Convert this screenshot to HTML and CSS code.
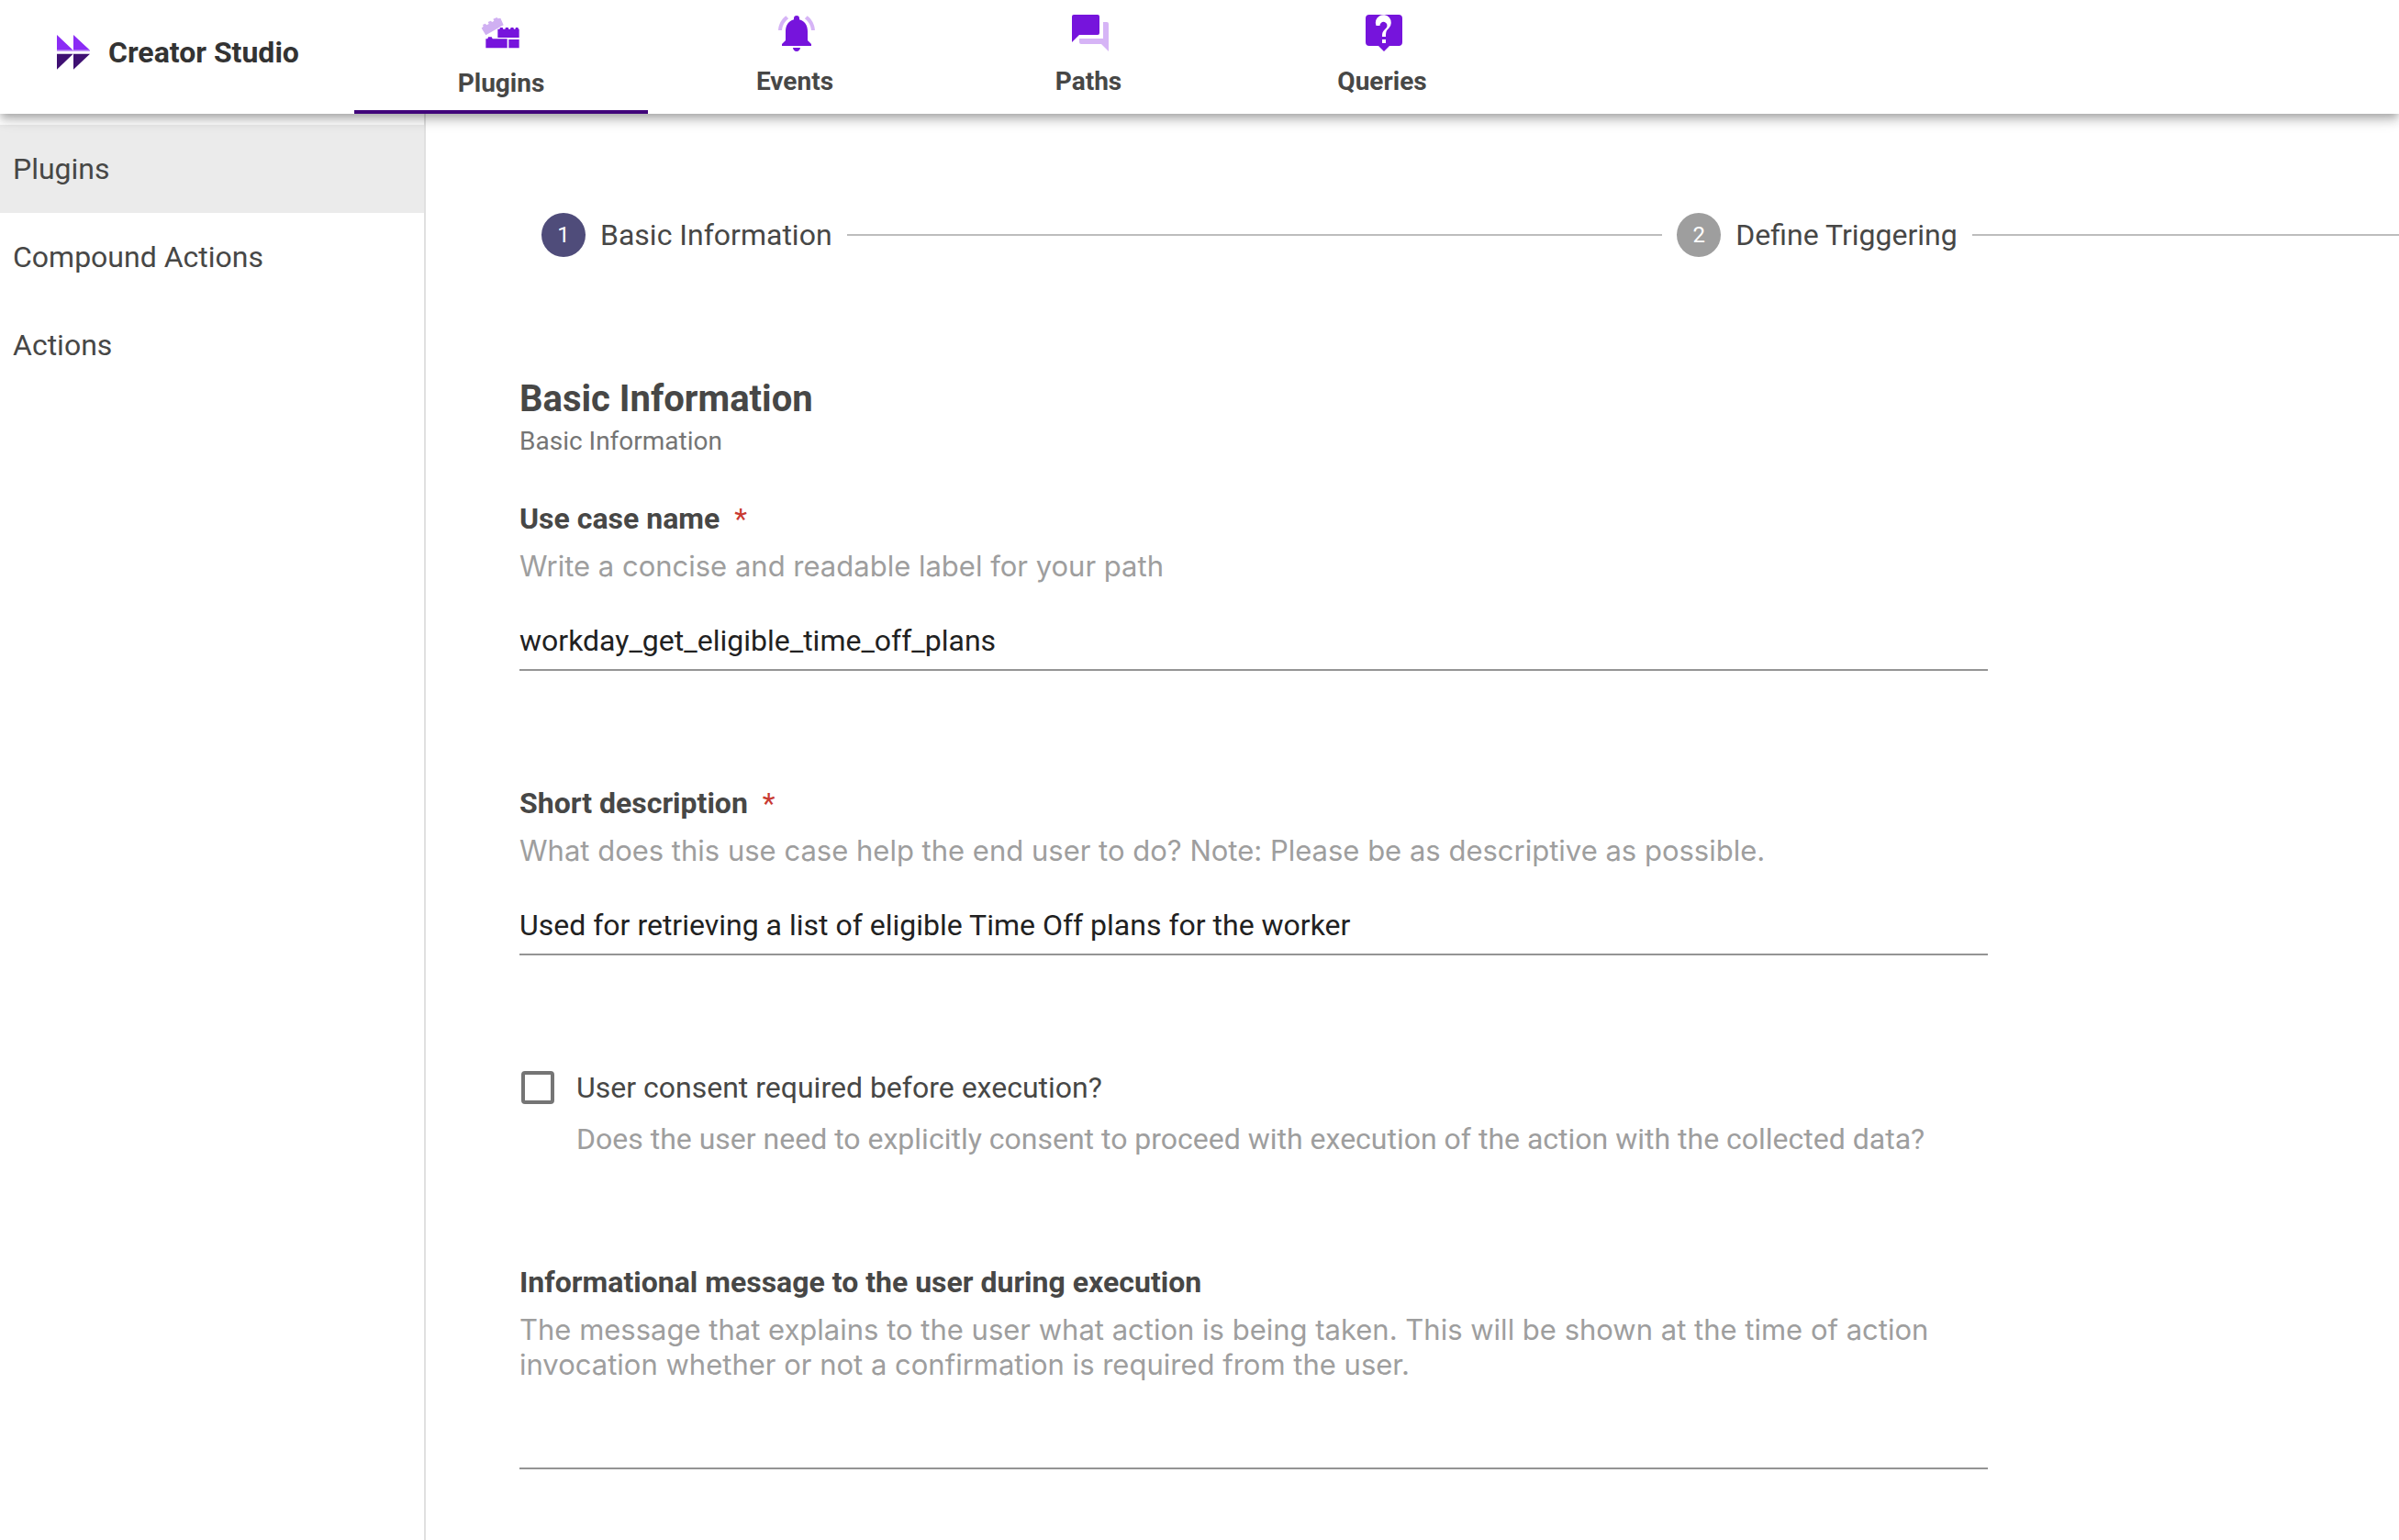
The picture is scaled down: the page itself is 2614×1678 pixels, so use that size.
FILE: index.html
```html
<!DOCTYPE html>
<html lang="en">
<head>
<meta charset="utf-8">
<meta name="viewport" content="width=device-width, initial-scale=1">
<title>Creator Studio</title>
<link rel="stylesheet" href="styles.css">
</head>
<body>
<header class="topbar">
  <a class="brand" href="#">
    <svg class="brand-mark" viewBox="0 0 108 114" aria-hidden="true">
      <path fill="#8b2cf5" d="M0 0 53 50H0zM54 0l54 50H54z"/>
      <path fill="#c9a0fa" d="M0 50h108v4H0z"/>
      <path fill="#3f1073" d="M0 62h53L0 113zM54 62h54L54 113z"/>
    </svg>
    <span>Creator Studio</span>
  </a>
  <nav class="tabs" aria-label="Sections">
    <a class="tab tab-active" href="#" aria-current="page">
      <svg class="tab-icon" viewBox="0 0 144 144" aria-hidden="true">
        <path fill="#d0b0f2" d="M8 56 14 50 12 45 20 41 25 46 32 42 29 36 38 32 43 36 49 32 46 26 58 21 62 25 70 23 80 46 22 79z"/>
        <path fill="#7614dc" d="M61 59h6l2-5h8l2 5h6l2-5h8l2 5h5l2-5h8l2 5h4l2-5h7l2 5h2v28H61zM22 91h6l2-6h11l3 6h48v30H22zM97 93h34v28H97z"/>
      </svg>
      <span>Plugins</span>
    </a>
    <a class="tab" href="#">
      <svg class="tab-icon" viewBox="0 0 48 48" aria-hidden="true">
        <path fill="#7614dc" d="M26 44c2.200 0 4-1.800 4-4h-8c0 2.200 1.800 4 4 4zM38 32V22c0-6.140-3.260-11.280-9-12.640V8a3 3 0 0 0-6 0v1.360C17.280 10.720 14 15.840 14 22v10l-4 4v2h32v-2z"/>
        <path fill="#d6b4f6" d="M17.160 8.160 14.300 5.300C9.500 8.960 6.340 14.600 6.060 21h4c.3-5.300 3.020-9.940 7.100-12.840zM41.940 21h4c-.3-6.400-3.460-12.040-8.240-15.700l-2.840 2.860c4.040 2.900 6.780 7.540 7.080 12.840z"/>
      </svg>
      <span>Events</span>
    </a>
    <a class="tab" href="#">
      <svg class="tab-icon" viewBox="0 0 48 48" aria-hidden="true">
        <path fill="#7614dc" d="M36 24V6a2 2 0 0 0-2-2H8a2 2 0 0 0-2 2v28l8-8h20a2 2 0 0 0 2-2z"/>
        <path fill="#d6b4f6" d="M44 12h-4v18H14v4a2 2 0 0 0 2 2h22l8 8V14a2 2 0 0 0-2-2z"/>
      </svg>
      <span>Paths</span>
    </a>
    <a class="tab" href="#">
      <svg class="tab-icon" viewBox="0 0 48 48" aria-hidden="true">
        <path fill="#7614dc" d="M42 4H10a4 4 0 0 0-4 4v26a4 4 0 0 0 4 4h10l6 6 6-6h10a4 4 0 0 0 4-4V8a4 4 0 0 0-4-4z"/>
        <path fill="#fff" d="M24 31h4v4h-4zM31.500 18.500l-1.600 1.700C28.600 21.500 28 23 28 28h-4v-1c0-3 .8-4.800 2.300-6.300l2.400-2.500A4 4 0 1 0 21.500 16h-4a8.500 8.500 0 1 1 14 2.500z"/>
      </svg>
      <span>Queries</span>
    </a>
  </nav>
</header>
<div class="layout">
  <nav class="sidebar" aria-label="Plugins menu">
    <a class="side-link side-link-active" href="#" aria-current="page">Plugins</a>
    <a class="side-link" href="#">Compound Actions</a>
    <a class="side-link" href="#">Actions</a>
  </nav>
  <main class="main">
    <ol class="stepper">
      <li class="step" aria-current="step"><span class="step-number step-number-active">1</span><span>Basic Information</span></li>
      <li class="connector" aria-hidden="true"></li>
      <li class="step"><span class="step-number">2</span><span>Define Triggering</span></li>
      <li class="connector" aria-hidden="true"></li>
    </ol>
    <form class="form">
      <h1 class="form-title">Basic Information</h1>
      <p class="form-subtitle">Basic Information</p>
      <div class="field">
        <label class="label" for="use-case">Use case name<span class="required">*</span></label>
        <p class="hint" id="use-case-hint">Write a concise and readable label for your path</p>
        <input class="text-input" id="use-case" type="text" value="workday_get_eligible_time_off_plans" aria-describedby="use-case-hint">
      </div>
      <div class="field">
        <label class="label" for="description">Short description<span class="required">*</span></label>
        <p class="hint" id="description-hint">What does this use case help the end user to do? Note: Please be as descriptive as possible.</p>
        <input class="text-input" id="description" type="text" value="Used for retrieving a list of eligible Time Off plans for the worker" aria-describedby="description-hint">
      </div>
      <div class="consent">
        <input class="checkbox" id="consent" type="checkbox" aria-describedby="consent-hint">
        <label class="consent-label" for="consent">User consent required before execution?</label>
        <p class="consent-hint" id="consent-hint">Does the user need to explicitly consent to proceed with execution of the action with the collected data?</p>
      </div>
      <div class="field">
        <label class="label" for="message">Informational message to the user during execution</label>
        <p class="hint" id="message-hint">The message that explains to the user what action is being taken. This will be shown at the time of action invocation whether or not a confirmation is required from the user.</p>
        <input class="text-input" id="message" type="text" aria-describedby="message-hint">
      </div>
    </form>
  </main>
</div>
</body>
</html>
```
FILE: styles.css
```css
* {
  box-sizing: border-box;
}

body {
  margin: 0;
  min-height: 100vh;
  display: flex;
  flex-direction: column;
  overflow-x: hidden;
  background: #fff;
  color: #474746;
  font-family: Roboto, "Liberation Sans", sans-serif;
  font-size: 32px;
  line-height: 38px;
}

a {
  color: inherit;
  text-decoration: none;
}

p,
h1 {
  margin: 0;
}

.topbar {
  position: relative;
  z-index: 1;
  display: flex;
  height: 124px;
  background: #fff;
  box-shadow: 0 4px 8px -2px rgba(0, 0, 0, 0.2), 0 8px 10px rgba(0, 0, 0, 0.14), 0 2px 20px rgba(0, 0, 0, 0.12);
}

.brand {
  display: flex;
  align-items: center;
  gap: 20px;
  width: 386px;
  padding: 0 0 10px 62px;
  color: #333;
  font-weight: 700;
}

.brand-mark {
  width: 36px;
  height: 38px;
}

.tabs {
  display: flex;
}

.tab {
  display: flex;
  flex-direction: column;
  align-items: center;
  gap: 12px;
  width: 320px;
  padding-top: 12px;
  font-size: 28px;
  font-weight: 700;
  line-height: 34px;
}

.tab-active {
  gap: 14px;
  border-bottom: 4px solid #40057a;
}

.tab-icon {
  width: 48px;
  height: 48px;
}

.layout {
  flex: 1;
  display: flex;
}

.sidebar {
  flex: none;
  width: 464px;
  padding-top: 12px;
  border-right: 2px solid #e0e0e0;
}

.side-link {
  display: flex;
  align-items: center;
  height: 96px;
  padding: 0 14px;
}

.side-link-active {
  background: #ebebeb;
}

.main {
  flex: 1;
  min-width: 0;
  overflow: hidden;
  padding: 108px 102px 76px;
}

.stepper {
  display: flex;
  align-items: center;
  gap: 16px;
  margin: 0 0 131px;
  padding: 0 0 0 24px;
  list-style: none;
}

.step {
  flex: none;
  display: flex;
  align-items: center;
  gap: 16px;
}

.step-number {
  width: 48px;
  height: 48px;
  border-radius: 50%;
  background: #9e9e9e;
  color: #fff;
  font-size: 24px;
  line-height: 48px;
  text-align: center;
}

.step-number-active {
  background: #4f4c7a;
}

.connector {
  flex: none;
  width: 34vw;
  border-top: 2px solid #bdbdbd;
}

.form {
  max-width: 1600px;
}

.form-title {
  font-size: 40px;
  font-weight: 700;
  line-height: 48px;
}

.form-subtitle {
  margin: 5px 0 48px;
  color: #757575;
  font-size: 28px;
  line-height: 34px;
}

.field {
  display: flex;
  flex-direction: column;
  margin-bottom: 125px;
}

.field:last-child {
  margin-bottom: 0;
}

.label {
  font-weight: 700;
}

.required {
  margin-left: 16px;
  color: #c93a32;
  font-weight: 400;
}

.hint {
  margin: 14px 0 31px;
  color: #9e9e9e;
  font-family: Inter, Roboto, sans-serif;
  font-size: 31px;
}

.text-input {
  width: 100%;
  height: 64px;
  padding: 12px 0;
  border: 0;
  border-bottom: 2px solid #949494;
  border-radius: 0;
  outline: 0;
  background: none;
  color: #212121;
  font: inherit;
}

.consent {
  display: grid;
  grid-template-columns: 38px 1fr;
  gap: 18px 24px;
  align-items: center;
  margin-bottom: 118px;
}

.checkbox {
  appearance: none;
  width: 36px;
  height: 36px;
  margin: 0 0 0 2px;
  border: 4px solid #757575;
  border-radius: 4px;
}

.consent-hint {
  grid-column: 2;
  color: #9e9e9e;
}
```
